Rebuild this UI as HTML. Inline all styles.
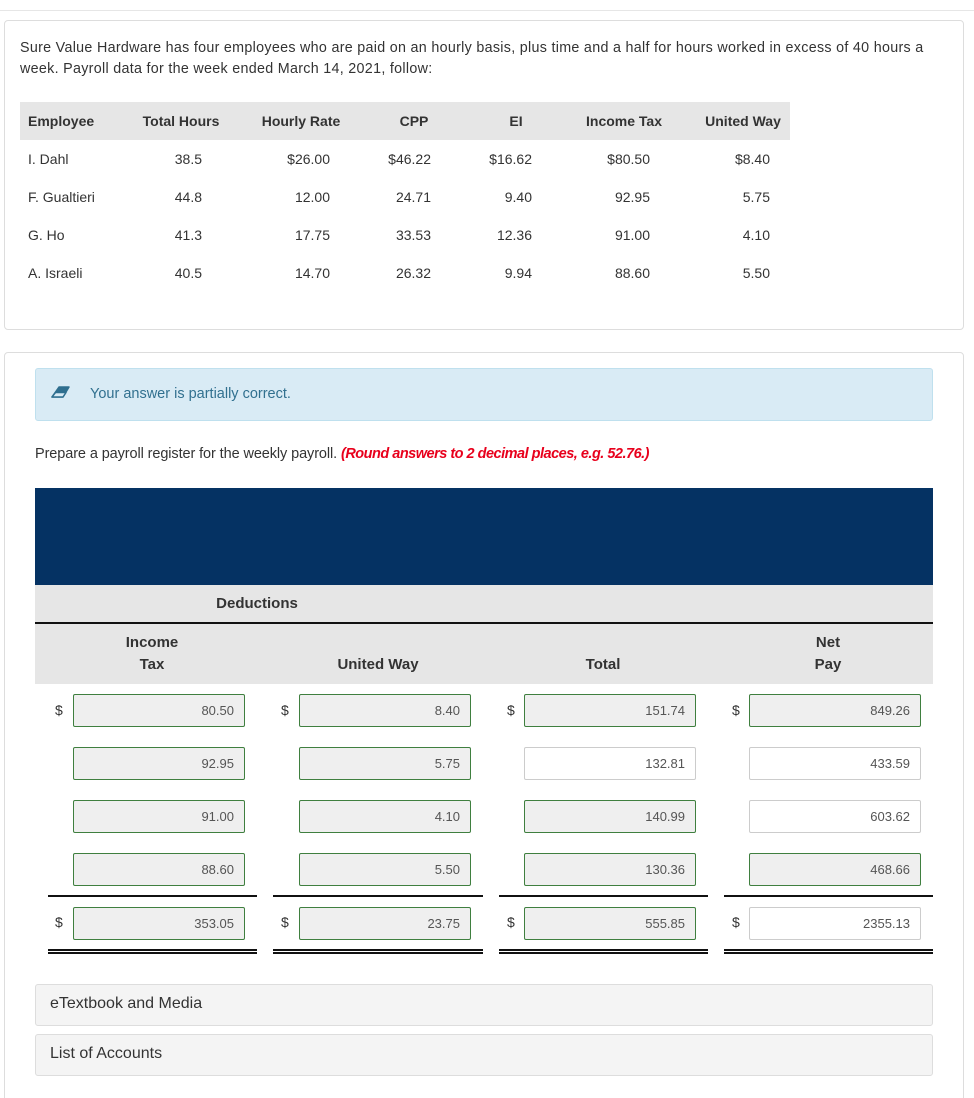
<!DOCTYPE html>
<html><head><meta charset="utf-8"><style>
*{box-sizing:border-box;margin:0;padding:0}
html,body{width:974px;height:1098px;overflow:hidden}
body{background:#fff;font-family:"Liberation Sans",sans-serif;color:#333;position:relative}
.a{position:absolute;white-space:nowrap}
.card{position:absolute;border:1px solid #ddd;border-radius:4px;background:#fff}
.t{font-size:14px;color:#333}
.h{font-size:14px;font-weight:bold;color:#333}
.r{text-align:right}
.c{text-align:center}
.box{position:absolute;width:172px;height:33px;border:1px solid #3f7f3f;background:#efefef;border-radius:2px;font-size:13px;color:#555;text-align:right;padding-right:10px;line-height:31px}
.w{border-color:#ccc;background:#fff}
.d{position:absolute;font-size:14px;color:#333}
.ln{position:absolute;height:2px;background:#111}
.dl{position:absolute;height:5px;border-top:2px solid #111;border-bottom:2px solid #111}
</style></head><body>
<div class="a" style="left:0;top:10px;width:974px;height:1px;background:#e6e6e6"></div>
<div class="card" style="left:4px;top:20px;width:960px;height:310px"></div>
<div class="a t" style="left:20px;top:38px;line-height:21px;white-space:normal;width:935px;font-size:14.3px;letter-spacing:0.3px">Sure Value Hardware has four employees who are paid on an hourly basis, plus time and a half for hours worked in excess of 40 hours a week. Payroll data for the week ended March 14, 2021, follow:</div>
<div class="a" style="left:20px;top:102px;width:770px;height:38px;background:#e6e6e6"></div>
<div class="a h" style="left:28px;top:113px">Employee</div>
<div class="a h c" style="left:131px;top:113px;width:100px">Total Hours</div>
<div class="a h c" style="left:251px;top:113px;width:100px">Hourly Rate</div>
<div class="a h c" style="left:384px;top:113px;width:60px">CPP</div>
<div class="a h c" style="left:496px;top:113px;width:40px">EI</div>
<div class="a h c" style="left:574px;top:113px;width:100px">Income Tax</div>
<div class="a h c" style="left:693px;top:113px;width:100px">United Way</div>

<div class="a t" style="left:28px;top:151px">I. Dahl</div>
<div class="a t" style="left:28px;top:189px">F. Gualtieri</div>
<div class="a t" style="left:28px;top:227px">G. Ho</div>
<div class="a t" style="left:28px;top:265px">A. Israeli</div>

<div class="a t r" style="left:132px;top:151px;width:70px">38.5</div>
<div class="a t r" style="left:132px;top:189px;width:70px">44.8</div>
<div class="a t r" style="left:132px;top:227px;width:70px">41.3</div>
<div class="a t r" style="left:132px;top:265px;width:70px">40.5</div>

<div class="a t r" style="left:250px;top:151px;width:80px">$26.00</div>
<div class="a t r" style="left:250px;top:189px;width:80px">12.00</div>
<div class="a t r" style="left:250px;top:227px;width:80px">17.75</div>
<div class="a t r" style="left:250px;top:265px;width:80px">14.70</div>

<div class="a t r" style="left:351px;top:151px;width:80px">$46.22</div>
<div class="a t r" style="left:351px;top:189px;width:80px">24.71</div>
<div class="a t r" style="left:351px;top:227px;width:80px">33.53</div>
<div class="a t r" style="left:351px;top:265px;width:80px">26.32</div>

<div class="a t r" style="left:452px;top:151px;width:80px">$16.62</div>
<div class="a t r" style="left:452px;top:189px;width:80px">9.40</div>
<div class="a t r" style="left:452px;top:227px;width:80px">12.36</div>
<div class="a t r" style="left:452px;top:265px;width:80px">9.94</div>

<div class="a t r" style="left:570px;top:151px;width:80px">$80.50</div>
<div class="a t r" style="left:570px;top:189px;width:80px">92.95</div>
<div class="a t r" style="left:570px;top:227px;width:80px">91.00</div>
<div class="a t r" style="left:570px;top:265px;width:80px">88.60</div>

<div class="a t r" style="left:690px;top:151px;width:80px">$8.40</div>
<div class="a t r" style="left:690px;top:189px;width:80px">5.75</div>
<div class="a t r" style="left:690px;top:227px;width:80px">4.10</div>
<div class="a t r" style="left:690px;top:265px;width:80px">5.50</div>

<div class="card" style="left:4px;top:352px;width:960px;height:780px"></div>
<div class="a" style="left:35px;top:368px;width:898px;height:53px;background:#d9ebf5;border:1px solid #bfe0ee;border-radius:3px"></div>
<svg class="a" style="left:51px;top:386px" width="20" height="14" viewBox="0 0 20 14"><path d="M8 1 L18 1 L12 11 L1 11 Z" fill="#2f6f8f" stroke="#2f6f8f" stroke-width="1.5" stroke-linejoin="round"/><path d="M4.5 6.5 L15 6.5 L12 11 L1 11 Z" fill="#d9ebf5" stroke="#2f6f8f" stroke-width="1.5" stroke-linejoin="round"/></svg>
<div class="a" style="left:90px;top:386px;font-size:14.5px;color:#31708f">Your answer is partially correct.</div>
<div class="a t" style="left:35px;top:446px;font-size:14.5px;letter-spacing:-0.1px">Prepare a payroll register for the weekly payroll. <span style="color:#e8001c;font-weight:bold;font-style:italic;letter-spacing:-0.5px">(Round answers to 2 decimal places, e.g. 52.76.)</span></div>

<div class="a" style="left:35px;top:488px;width:898px;height:97px;background:#053263"></div>
<div class="a" style="left:35px;top:585px;width:898px;height:38px;background:#e6e6e6"></div>
<div class="a h c" style="left:157px;top:595px;width:200px;font-size:15px">Deductions</div>
<div class="a" style="left:35px;top:622px;width:898px;height:2px;background:#111"></div>
<div class="a" style="left:35px;top:624px;width:898px;height:60px;background:#e6e6e6"></div>
<div class="a h c" style="left:102px;top:632px;width:100px;font-size:15px;line-height:22px">Income<br>Tax</div>
<div class="a h c" style="left:328px;top:656px;width:100px;font-size:15px">United Way</div>
<div class="a h c" style="left:553px;top:656px;width:100px;font-size:15px">Total</div>
<div class="a h c" style="left:778px;top:632px;width:100px;font-size:15px;line-height:22px">Net<br>Pay</div>

<div class="d" style="left:55px;top:702px">$</div>
<div class="box" style="left:73px;top:694px">80.50</div>
<div class="box" style="left:73px;top:747px">92.95</div>
<div class="box" style="left:73px;top:800px">91.00</div>
<div class="box" style="left:73px;top:853px">88.60</div>
<div class="ln" style="left:48px;top:895px;width:209px"></div>
<div class="d" style="left:55px;top:914px">$</div>
<div class="box" style="left:73px;top:907px">353.05</div>
<div class="dl" style="left:48px;top:949px;width:209px"></div>

<div class="d" style="left:281px;top:702px">$</div>
<div class="box" style="left:299px;top:694px">8.40</div>
<div class="box" style="left:299px;top:747px">5.75</div>
<div class="box" style="left:299px;top:800px">4.10</div>
<div class="box" style="left:299px;top:853px">5.50</div>
<div class="ln" style="left:273px;top:895px;width:210px"></div>
<div class="d" style="left:281px;top:914px">$</div>
<div class="box" style="left:299px;top:907px">23.75</div>
<div class="dl" style="left:273px;top:949px;width:210px"></div>

<div class="d" style="left:507px;top:702px">$</div>
<div class="box" style="left:524px;top:694px">151.74</div>
<div class="box w" style="left:524px;top:747px">132.81</div>
<div class="box" style="left:524px;top:800px">140.99</div>
<div class="box" style="left:524px;top:853px">130.36</div>
<div class="ln" style="left:499px;top:895px;width:209px"></div>
<div class="d" style="left:507px;top:914px">$</div>
<div class="box" style="left:524px;top:907px">555.85</div>
<div class="dl" style="left:499px;top:949px;width:209px"></div>

<div class="d" style="left:732px;top:702px">$</div>
<div class="box" style="left:749px;top:694px">849.26</div>
<div class="box w" style="left:749px;top:747px">433.59</div>
<div class="box w" style="left:749px;top:800px">603.62</div>
<div class="box" style="left:749px;top:853px">468.66</div>
<div class="ln" style="left:724px;top:895px;width:209px"></div>
<div class="d" style="left:732px;top:914px">$</div>
<div class="box w" style="left:749px;top:907px">2355.13</div>
<div class="dl" style="left:724px;top:949px;width:209px"></div>

<div class="a" style="left:35px;top:984px;width:898px;height:42px;background:#f4f4f4;border:1px solid #ddd;border-radius:3px"></div>
<div class="a" style="left:50px;top:995px;font-size:16px;color:#333">eTextbook and Media</div>
<div class="a" style="left:35px;top:1034px;width:898px;height:42px;background:#f4f4f4;border:1px solid #ddd;border-radius:3px"></div>
<div class="a" style="left:50px;top:1045px;font-size:16px;color:#333">List of Accounts</div>
</body></html>
